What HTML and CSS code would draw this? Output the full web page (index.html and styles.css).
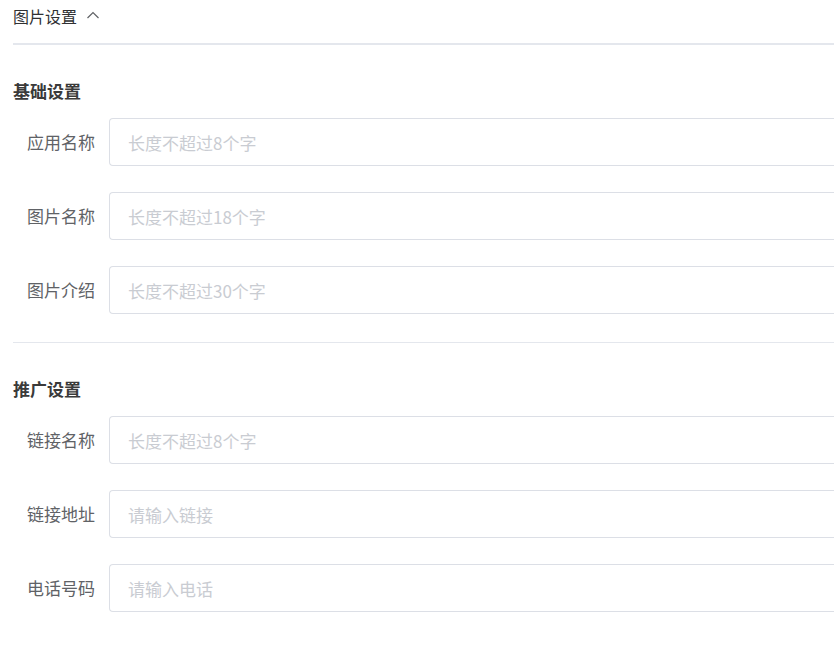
FILE: index.html
```html
<!DOCTYPE html>
<html lang="zh-CN">
<head>
<meta charset="utf-8">
<title>图片设置</title>
<link rel="stylesheet" href="styles.css">
</head>
<body>
<div class="page">
  <div class="collapse-head">
    <span class="collapse-title">图片设置</span>
    <svg class="chevron" width="14" height="10" viewBox="0 0 14 10"><polyline points="1.5,8 7,2.5 12.5,8" fill="none" stroke="#606266" stroke-width="1.2"/></svg>
  </div>
  <section class="group">
    <h3 class="group-title">基础设置</h3>
    <div class="rows">
      <div class="row"><label class="label">应用名称</label><input class="input" placeholder="长度不超过8个字"></div>
      <div class="row"><label class="label">图片名称</label><input class="input" placeholder="长度不超过18个字"></div>
      <div class="row"><label class="label">图片介绍</label><input class="input" placeholder="长度不超过30个字"></div>
    </div>
  </section>
  <section class="group group-second">
    <h3 class="group-title">推广设置</h3>
    <div class="rows">
      <div class="row"><label class="label">链接名称</label><input class="input" placeholder="长度不超过8个字"></div>
      <div class="row"><label class="label">链接地址</label><input class="input" placeholder="请输入链接"></div>
      <div class="row"><label class="label">电话号码</label><input class="input" placeholder="请输入电话"></div>
    </div>
  </section>
</div>
</body>
</html>
```
FILE: styles.css
```css
html, body {
  margin: 0;
  padding: 0;
  background: #ffffff;
}
body {
  font-family: "Noto Sans CJK SC", "Microsoft YaHei", sans-serif;
  color: #303133;
}
.page {
  padding-left: 13px;
}
.collapse-head {
  display: flex;
  align-items: center;
  height: 32px;
  padding-bottom: 11px;
  border-bottom: 2px solid #e4e7ed;
}
.collapse-title {
  font-size: 16px;
  line-height: 32px;
  color: #303133;
}
.chevron {
  margin-left: 9px;
  margin-top: -2px;
}
.group {
  padding-top: 34px;
  padding-bottom: 28px;
}
.group-second {
  border-top: 1px solid #e4e7ed;
}
.group-title {
  margin: 0 0 15px 0;
  font-size: 17px;
  line-height: 24px;
  font-weight: bold;
  color: #3a3a3a;
}
.rows {
  display: flex;
  flex-direction: column;
  gap: 26px;
}
.row {
  display: flex;
  align-items: center;
}
.label {
  width: 82px;
  padding-right: 14px;
  text-align: right;
  font-size: 17px;
  line-height: 48px;
  color: #606266;
  flex-shrink: 0;
}
.input {
  box-sizing: border-box;
  flex: 1;
  min-width: 0;
  height: 48px;
  border: 1px solid #dcdfe6;
  border-right: none;
  border-radius: 4px 0 0 4px;
  padding: 0 18px;
  font-family: "Noto Sans CJK SC", "Microsoft YaHei", sans-serif;
  font-size: 17px;
  color: #606266;
  outline: none;
  background: #fff;
}
.input::placeholder {
  color: #c9ccd2;
}
```
